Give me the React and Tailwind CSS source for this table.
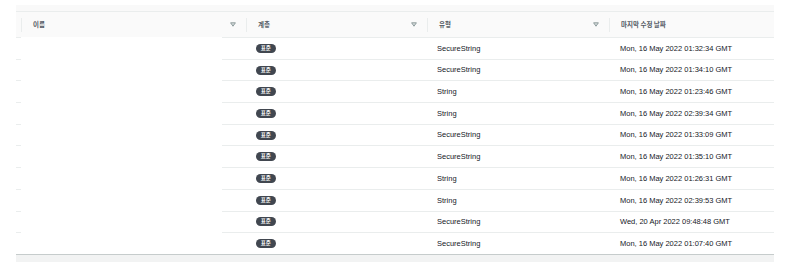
import React from "react";

const rows = [
  ["SecureString", "Mon, 16 May 2022 01:32:34 GMT"],
  ["SecureString", "Mon, 16 May 2022 01:34:10 GMT"],
  ["String", "Mon, 16 May 2022 01:23:46 GMT"],
  ["String", "Mon, 16 May 2022 02:39:34 GMT"],
  ["SecureString", "Mon, 16 May 2022 01:33:09 GMT"],
  ["SecureString", "Mon, 16 May 2022 01:35:10 GMT"],
  ["String", "Mon, 16 May 2022 01:26:31 GMT"],
  ["String", "Mon, 16 May 2022 02:39:53 GMT"],
  ["SecureString", "Wed, 20 Apr 2022 09:48:48 GMT"],
  ["SecureString", "Mon, 16 May 2022 01:07:40 GMT"],
];

const ko = { fontFamily: '"Noto Sans CJK KR", "Noto Sans", sans-serif' };
const lat = { fontFamily: '"Liberation Sans", Arial, sans-serif' };

function SortIcon() {
  return (
    <svg width="6" height="5" viewBox="0 0 6 5" className="shrink-0">
      <path d="M0.6 0.8 H5.4 L3 4.2 Z" fill="#d5dbdb" stroke="#879596" strokeWidth="0.9" strokeLinejoin="round" />
    </svg>
  );
}

function HeaderCell({ w, label, sort }) {
  return (
    <div className={`${w} flex items-center h-full pl-[5px] pr-[5px]`}>
      <div className="w-px h-[14px] bg-[#eaeded]" />
      <span className="ml-[11px] text-[6.5px] text-[#545b64] font-semibold" style={ko}>{label}</span>
      <div className="flex-1" />
      {sort && <SortIcon />}
    </div>
  );
}

export default function App() {
  return (
    <div className="w-[791px] h-[262px] bg-white relative overflow-hidden">
      <div className="ml-[16px] w-[758px] pt-[5px]">
        <div className="h-[6px] bg-[#f9f9f9]" />
        <div className="flex h-[27px] bg-[#fafafa] border-t border-b border-[#eaeded]">
          <HeaderCell w="w-[225px]" label="이름" sort />
          <HeaderCell w="w-[181px]" label="계층" sort />
          <HeaderCell w="w-[182px]" label="유형" sort />
          <HeaderCell w="w-[170px]" label="마지막 수정 날짜" />
        </div>
        {rows.map(([type, date], i) => (
          <div
            key={i}
            className={`flex items-center h-[21.7px] border-b ${i === rows.length - 1 ? "border-[#c6cccc]" : "border-[#eaeded]"}`}
          >
            <div className="w-[225px]" />
            <div className="w-[181px] pl-[15px] flex items-center">
              <span className="h-[9px] w-[19.5px] rounded-full bg-[#414750] text-white text-[5.5px] leading-[9px] text-center font-bold" style={ko}>
                표준
              </span>
            </div>
            <div className="w-[182px] pl-[15px] text-[7.5px] text-[#16191f]" style={lat}>{type}</div>
            <div className="w-[170px] pl-[16px] text-[7.5px] text-[#16191f]" style={lat}>{date}</div>
          </div>
        ))}
        <div className="h-[10px] bg-[#f2f3f3]" />
      </div>
      <div className="absolute left-[21px] top-[37px] w-[201px] h-[216px] bg-white" />
    </div>
  );
}
